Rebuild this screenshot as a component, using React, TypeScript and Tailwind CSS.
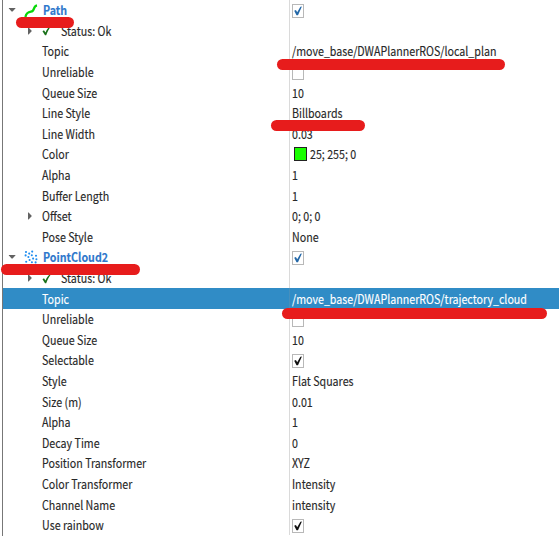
import React from "react";

type Kind = "text" | "check" | "blueCheck" | "empty" | "color" | "none";
interface Row {
  label: string;
  value?: string;
  kind?: Kind;
  level?: "display" | "status";
  icon?: "path" | "cloud";
  arrow?: boolean;
  selected?: boolean;
}

const rows: Row[] = [
  { label: "Path", kind: "blueCheck", level: "display", icon: "path" },
  { label: "Status: Ok", kind: "none", level: "status" },
  { label: "Topic", value: "/move_base/DWAPlannerROS/local_plan" },
  { label: "Unreliable", kind: "empty" },
  { label: "Queue Size", value: "10" },
  { label: "Line Style", value: "Billboards" },
  { label: "Line Width", value: "0.03" },
  { label: "Color", value: "25; 255; 0", kind: "color" },
  { label: "Alpha", value: "1" },
  { label: "Buffer Length", value: "1" },
  { label: "Offset", value: "0; 0; 0", arrow: true },
  { label: "Pose Style", value: "None" },
  { label: "PointCloud2", kind: "blueCheck", level: "display", icon: "cloud" },
  { label: "Status: Ok", kind: "none", level: "status" },
  { label: "Topic", value: "/move_base/DWAPlannerROS/trajectory_cloud", selected: true },
  { label: "Unreliable", kind: "empty" },
  { label: "Queue Size", value: "10" },
  { label: "Selectable", kind: "check" },
  { label: "Style", value: "Flat Squares" },
  { label: "Size (m)", value: "0.01" },
  { label: "Alpha", value: "1" },
  { label: "Decay Time", value: "0" },
  { label: "Position Transformer", value: "XYZ" },
  { label: "Color Transformer", value: "Intensity" },
  { label: "Channel Name", value: "intensity" },
  { label: "Use rainbow", kind: "check" },
];

const markers = [
  "left-[16px] top-[17px] w-[58px]",
  "left-[277px] top-[59px] w-[228px]",
  "left-[271px] top-[120px] w-[94px]",
  "left-[1px] top-[264px] w-[139px]",
  "left-[282px] top-[308px] w-[265px]",
];

function Arrow({ open = false }: { open?: boolean }) {
  return (
    <svg className="block h-2 w-2 shrink-0" viewBox="0 0 8 8" fill="#626262">
      <path d={open ? "M.9 2h6.4v.6L4.6 5.5h-1L.9 2.6z" : "M2 .5h.6L5.4 3.6v.8L2.6 7.5H2z"} />
    </svg>
  );
}

function StatusTick() {
  return (
    <svg className="block h-[11px] w-[10px] shrink-0" viewBox="0 0 10 11" fill="#187018">
      <path d="M.5 6.2 2 5.2 3.5 7.4C4.8 4.6 6.5 2 8.9.5L9.3.9C7.1 3.5 5.4 6.8 4.2 10.3H3Z" />
    </svg>
  );
}

function PathIcon() {
  return (
    <svg className="block h-[15px] w-[14px] shrink-0" viewBox="0 0 14 15" fill="none" stroke="#08d808" strokeWidth="2.3">
      <path d="M1.4 14C2.4 9.7 4.4 9.2 6.9 8.7 11.2 8 8.7 3.2 13 2.4" />
    </svg>
  );
}

const dots = [
  [2, 2], [5.2, 3.6], [8.2, 1.6], [1.6, 5.4], [4.4, 7], [7.8, 5.2],
  [5.6, 10], [2.2, 11.8], [7.9, 12.3], [9.1, 8.6], [12, 5.8], [12.4, 9.3], [11.6, 12.4],
];

function CloudIcon() {
  return (
    <svg className="block h-[14px] w-[14px] shrink-0" viewBox="0 0 14 14" fill="#1e8df0">
      {dots.map(([x, y]) => <circle key={`${x}-${y}`} cx={x} cy={y} r="1.05" />)}
    </svg>
  );
}

function Checkbox({ kind }: { kind: Kind }) {
  return (
    <span className="mt-px block h-[14px] w-3 shrink-0 border border-[#b8b8b8] bg-white">
      {kind !== "empty" && (
        <svg className="block h-3 w-[10px]" viewBox="0 0 10 12" fill={kind === "check" ? "#111" : "#2468a8"}>
          <path d="M1.2 5.8 2.9 5 4.2 7.3 7.4 1.8 8.9 1.5 5 10.2H3.5Z" />
        </svg>
      )}
    </span>
  );
}

function Text({ children, className = "" }: { children: React.ReactNode; className?: string }) {
  return (
    <span className={`block origin-left scale-x-[0.853] pt-[0.5px] [-webkit-text-stroke:0.15px_currentColor] ${className}`}>
      {children}
    </span>
  );
}

function Label({ row }: { row: Row }) {
  if (row.level === "display") {
    return (
      <div className="flex h-full w-[286px] shrink-0 items-center pl-[5px]">
        <Arrow open />
        <span className="ml-2 mr-[5px]">{row.icon === "path" ? <PathIcon /> : <CloudIcon />}</span>
        <Text className="font-bold text-[#2f78cc]">{row.label}</Text>
      </div>
    );
  }
  if (row.level === "status") {
    return (
      <div className="flex h-full w-[286px] shrink-0 items-center pl-[23px]">
        <Arrow />
        <span className="ml-2 mr-[9px]"><StatusTick /></span>
        <Text>{row.label}</Text>
      </div>
    );
  }
  return (
    <div className="flex h-full w-[286px] shrink-0 items-center pl-[23px]">
      <span className="mr-[7.5px] w-2">{row.arrow && <Arrow />}</span>
      <Text>{row.label}</Text>
    </div>
  );
}

function Value({ row }: { row: Row }) {
  const boxed = row.kind === "check" || row.kind === "blueCheck" || row.kind === "empty";
  const edge = row.selected ? "border-[#468fbd]" : "border-[#dadada]";
  return (
    <div className={`flex h-full min-w-0 flex-1 items-center border-l pl-[2px] ${edge}`}>
      {boxed && <Checkbox kind={row.kind!} />}
      {row.kind === "color" && <span className="ml-[2px] mr-[3px] h-[14px] w-[13px] border border-[#222] bg-[#19ff00]" />}
      {row.value && <Text>{row.value}</Text>}
    </div>
  );
}

export default function App() {
  return (
    <main className="relative h-[536px] w-[559px] overflow-hidden bg-white pl-[2px] font-['Noto_Sans_CJK_SC',sans-serif] text-[12.5px] leading-none text-[#282828]">
      <div className="grid h-[536px] auto-rows-[20.6px] border-l border-[#777]">
        {rows.map((row, index) => (
          <div key={index} className={`flex items-center whitespace-nowrap ${row.selected ? "bg-[#308cc6] text-white" : ""}`}>
            <Label row={row} />
            <Value row={row} />
          </div>
        ))}
      </div>
      {markers.map((place) => (
        <div key={place} className={`absolute h-[11px] rounded-full bg-[#e71c1c] ${place}`} />
      ))}
    </main>
  );
}
